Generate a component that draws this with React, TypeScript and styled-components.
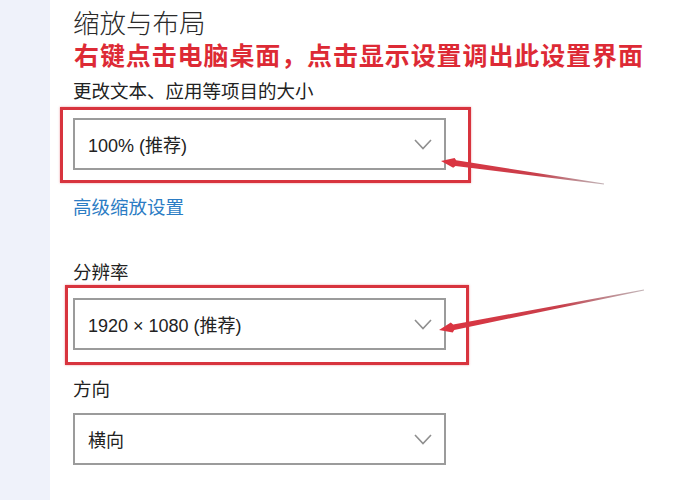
import React from 'react'
import styled, { createGlobalStyle } from 'styled-components'

const GlobalStyle = createGlobalStyle`
  html, body {
    margin: 0;
    padding: 0;
    background: #ffffff;
  }
  body {
    font-family: "Noto Sans CJK SC", "Noto Sans", sans-serif;
    color: #1f1f1f;
  }
`

const Page = styled.div`
  position: relative;
  display: flex;
  width: 688px;
  height: 500px;
  overflow: hidden;
`

const Sidebar = styled.div`
  width: 50px;
  flex-shrink: 0;
  background: #eff2fa;
`

const Main = styled.div`
  flex: 1;
  display: flex;
  flex-direction: column;
  align-items: flex-start;
  padding: 4px 0 0 23px;
`

const Title = styled.h1`
  margin: 0;
  height: 35px;
  font-size: 26.5px;
  line-height: 35px;
  font-weight: 300;
  color: #2a2a2a;
`

const Note = styled.div`
  margin-left: 1px;
  height: 30px;
  font-size: 25px;
  line-height: 30px;
  font-weight: 700;
  color: #dd2a35;
  white-space: nowrap;
  letter-spacing: 0.9px;
`

const Label = styled.div<{ $top: number }>`
  margin-top: ${p => p.$top}px;
  height: 28px;
  font-size: 18.5px;
  line-height: 28px;
  color: #222;
  white-space: nowrap;
`

const Link = styled.a`
  margin-top: 9px;
  height: 28px;
  font-size: 18.5px;
  line-height: 28px;
  color: #2b7cc4;
  text-decoration: none;
  cursor: pointer;
`

const Highlight = styled.div<{ $top: number; $left: number; $right: number; $padTop: number; $padBottom: number }>`
  margin-top: ${p => p.$top}px;
  margin-left: -${p => p.$left + 3}px;
  padding: ${p => p.$padTop}px ${p => p.$right}px ${p => p.$padBottom}px ${p => p.$left}px;
  border: 3px solid #d8343e;
  box-shadow: 0 0 2px rgba(216, 52, 62, 0.5);
`

const Select = styled.div<{ $top?: number }>`
  margin-top: ${p => p.$top ?? 0}px;
  box-sizing: border-box;
  width: 373px;
  height: 52px;
  display: flex;
  align-items: center;
  justify-content: space-between;
  padding: 0 12px 0 13px;
  border: 2px solid #9b9b9b;
  background: #fff;
  font-family: "Liberation Sans", "Noto Sans CJK SC", sans-serif;
  font-size: 18px;
  color: #222;
`

const Overlay = styled.svg`
  position: absolute;
  left: 0;
  top: 0;
  pointer-events: none;
`

const Chevron = () => (
  <svg width="18" height="11" viewBox="0 0 18 11">
    <path d="M1 1 L9 9.5 L17 1" fill="none" stroke="#8f8f8f" strokeWidth="1.6" />
  </svg>
)

type Pt = [number, number]

function arrowPoints(tip: Pt, tail: Pt): string {
  const dx = tail[0] - tip[0]
  const dy = tail[1] - tip[1]
  const len = Math.hypot(dx, dy)
  const ux = dx / len
  const uy = dy / len
  const nx = -uy
  const ny = ux
  const headLen = 13
  const headW = 5
  const shaftW = 2.8
  const tailW = 0.4
  const bx = tip[0] + ux * headLen
  const by = tip[1] + uy * headLen
  const pts: Pt[] = [
    tip,
    [bx + nx * headW, by + ny * headW],
    [bx + ux * 2 + nx * shaftW, by + uy * 2 + ny * shaftW],
    [tail[0] + nx * tailW, tail[1] + ny * tailW],
    [tail[0] - nx * tailW, tail[1] - ny * tailW],
    [bx + ux * 2 - nx * shaftW, by + uy * 2 - ny * shaftW],
    [bx - nx * headW, by - ny * headW],
  ]
  return pts.map(p => `${p[0].toFixed(1)},${p[1].toFixed(1)}`).join(' ')
}

const arrows: { tip: Pt; tail: Pt }[] = [
  { tip: [441, 161], tail: [604, 184] },
  { tip: [439, 330], tail: [644, 290] },
]

const selects = {
  scale: '100% (推荐)',
  resolution: '1920 × 1080 (推荐)',
  orientation: '横向',
}

export default function App() {
  return (
    <>
      <GlobalStyle />
      <Page>
        <Sidebar />
        <Main>
          <Title>缩放与布局</Title>
          <Note>右键点击电脑桌面，点击显示设置调出此设置界面</Note>
          <Label $top={7}>更改文本、应用等项目的大小</Label>
          <Highlight $top={3} $left={10} $right={22} $padTop={8} $padBottom={10}>
            <Select>
              <span>{selects.scale}</span>
              <Chevron />
            </Select>
          </Highlight>
          <Link>高级缩放设置</Link>
          <Label $top={37}>分辨率</Label>
          <Highlight $top={0} $left={5} $right={20} $padTop={10} $padBottom={12}>
            <Select>
              <span>{selects.resolution}</span>
              <Chevron />
            </Select>
          </Highlight>
          <Label $top={9}>方向</Label>
          <Select $top={11}>
            <span>{selects.orientation}</span>
            <Chevron />
          </Select>
        </Main>
        <Overlay width="688" height="500" viewBox="0 0 688 500">
          <defs>
            {arrows.map((a, i) => (
              <linearGradient
                key={i}
                id={`fade${i}`}
                gradientUnits="userSpaceOnUse"
                x1={a.tip[0]}
                y1={a.tip[1]}
                x2={a.tail[0]}
                y2={a.tail[1]}
              >
                <stop offset="0" stopColor="#dc3340" />
                <stop offset="0.6" stopColor="#c8404c" />
                <stop offset="1" stopColor="#8a6a70" stopOpacity="0.5" />
              </linearGradient>
            ))}
          </defs>
          {arrows.map((a, i) => (
            <polygon key={i} points={arrowPoints(a.tip, a.tail)} fill={`url(#fade${i})`} />
          ))}
        </Overlay>
      </Page>
    </>
  )
}
